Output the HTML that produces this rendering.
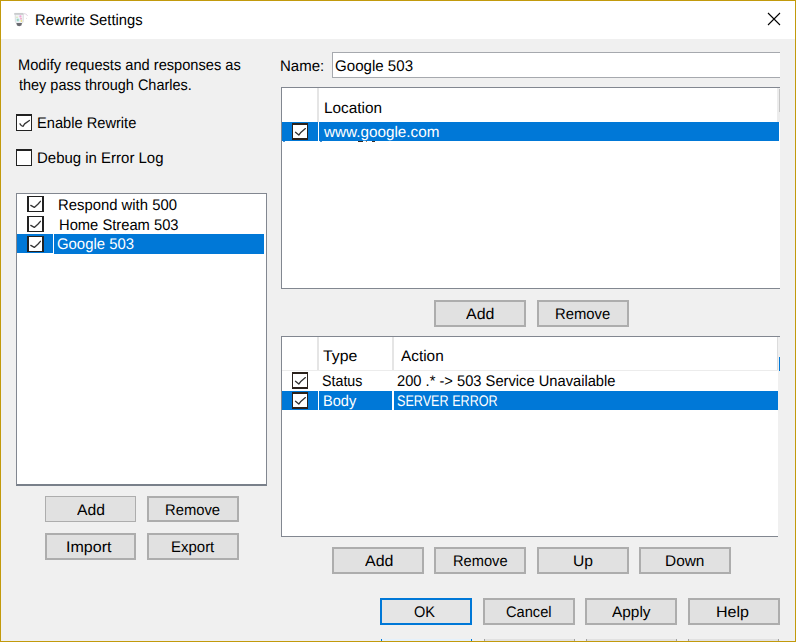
<!DOCTYPE html>
<html><head><meta charset="utf-8">
<style>
*{margin:0;padding:0;box-sizing:border-box}
html,body{width:796px;height:642px;overflow:hidden;background:#f0f0f0}
body{position:relative;font-family:"Liberation Sans",sans-serif;font-size:15.4px;color:#000;text-rendering:geometricPrecision}
.a{position:absolute}
.t{position:absolute;white-space:pre;line-height:20px;transform-origin:0 15px}
.frame{left:0;top:0;width:796px;height:642px;border:1px solid #c29a0c}
.title{left:1px;top:1px;width:794px;height:38px;background:#fff}
.cb{position:absolute;width:16px;height:17px;background:#fff;border:1px solid #222;border-top-width:2px}
.cbl{width:17px;height:16px;border:2px solid #222;border-top-width:1px;border-bottom-width:1px}
.cbt{width:16px;height:17px;border:1px solid #2a221c;border-top-width:2px;border-bottom-width:2px}
.btn{position:absolute;width:92px;height:27px;background:#e1e1e1;border:2px solid #adadad}
.b1{border-width:1px}
.tbl{position:absolute;background:#fff;border:1px solid #828790}
.sel{position:absolute;background:#0078d7}
</style></head><body>

<div class="a title"></div>
<svg class="a" style="left:0;top:0" width="32" height="32" viewBox="0 0 32 32">
  <path d="M24,13.6 Q26.8,13.6 27.6,16" stroke="#dcc9dc" stroke-width="0.8" fill="none"/>
  <circle cx="26.5" cy="18.3" r="0.5" fill="#d8d8d8"/>
  <path d="M14.6,13.4 L23.2,13.4 L23.4,15.2 L23.2,21.8 L22,23.6 L16.6,23.6 L15.4,21.8 L15.2,15.2 Z" fill="#f1f3f5" stroke="#cfd2d5" stroke-width="0.7"/>
  <rect x="14.4" y="13" width="9" height="1.8" fill="#c9cbcd"/>
  <circle cx="17.8" cy="20" r="1.7" fill="#bfe6f0"/>
  <circle cx="17.9" cy="20" r="0.75" fill="#7fbf7c"/>
  <circle cx="20.4" cy="16.4" r="1.1" fill="#f5a0d8"/>
  <circle cx="21" cy="18.8" r="1" fill="#f0b0c8"/>
  <circle cx="21.4" cy="21" r="0.9" fill="#eee08a"/>
  <circle cx="17" cy="17.2" r="0.7" fill="#cfe6a0"/>
  <path d="M16.4,23 L22,23 L21.4,25.4 L19.2,26.2 L17,25.4 Z" fill="#6a6a70"/>
</svg>
<svg class="a" style="left:767px;top:12px" width="14" height="14" viewBox="0 0 14 14"><path d="M1 1 L13 13 M13 1 L1 13" stroke="#000" stroke-width="1.1"/></svg>

<div class="cb" style="left:16px;top:114px"></div><svg class="a" style="left:16px;top:114px" width="17" height="17"><path d="M4,9.8 Q5.5,12.3 7,12.3 L8.6,9.9 L13.4,6.5" stroke="#333" stroke-width="1.3" fill="none" stroke-linecap="round" stroke-linejoin="round"/></svg>
<div class="cb" style="left:16px;top:149px"></div>

<div class="tbl" style="left:16px;top:193px;width:251px;height:293px;border-bottom:2px solid #79808a"></div>
<div class="sel" style="left:17px;top:234px;width:36px;height:19px"></div>
<div class="sel" style="left:54px;top:234px;width:210px;height:20px"></div>
<div class="cb cbl" style="left:27px;top:196px"></div><svg class="a" style="left:27px;top:196px" width="17" height="17"><path d="M3.8,9.4 L7.3,11.4 L11.1,8 L13.4,5.3" stroke="#333" stroke-width="1.3" fill="none" stroke-linecap="round" stroke-linejoin="round"/></svg>
<div class="cb cbl" style="left:27px;top:216px"></div><svg class="a" style="left:27px;top:216px" width="17" height="17"><path d="M3.8,9.4 L7.3,11.4 L11.1,8 L13.4,5.3" stroke="#333" stroke-width="1.3" fill="none" stroke-linecap="round" stroke-linejoin="round"/></svg>
<div class="cb cbl" style="left:27px;top:236px"></div><svg class="a" style="left:27px;top:236px" width="17" height="17"><path d="M3.8,9.4 L7.3,11.4 L11.1,8 L13.4,5.3" stroke="#333" stroke-width="1.3" fill="none" stroke-linecap="round" stroke-linejoin="round"/></svg>

<div class="btn b1" style="left:45px;top:496px;width:91px;height:26px"></div>
<div class="btn" style="left:147px;top:496px;height:26px"></div>
<div class="btn" style="left:45px;top:533px;width:91px"></div>
<div class="btn" style="left:147px;top:533px"></div>

<div class="a" style="left:332px;top:52px;width:448px;height:26px;background:#fff;border:1px solid #a6a9ae;border-right:none"></div>

<div class="tbl" style="left:281px;top:87px;width:499px;height:202px;border-right:none"></div>
<div class="a" style="left:317px;top:88px;width:2px;height:34px;background:#e5e5e5"></div>
<div class="a" style="left:777px;top:88px;width:3px;height:34px;background:#ececec"></div>
<div class="a" style="left:779px;top:89px;width:1px;height:23px;background:#c6c6c6"></div>
<div class="sel" style="left:282px;top:122px;width:36px;height:19px"></div>
<div class="sel" style="left:319px;top:122px;width:460px;height:19px"></div>
<div class="cb cbt" style="left:292px;top:123px"></div><svg class="a" style="left:292px;top:123px" width="17" height="17"><path d="M3.5,9.3 L6.8,12 L8.5,9.8 L13.4,5.6" stroke="#333" stroke-width="1.3" fill="none" stroke-linecap="round" stroke-linejoin="round"/></svg>
<div class="a" style="left:358px;top:141px;width:5px;height:1px;background:#3a2a20"></div><div class="a" style="left:366px;top:141px;width:1px;height:1px;background:#b08050"></div><div class="a" style="left:372px;top:141px;width:3px;height:1px;background:#3a2a20"></div><div class="a" style="left:283px;top:141px;width:2px;height:1px;background:#4a90d0"></div><div class="a" style="left:320px;top:141px;width:2px;height:1px;background:#4a90d0"></div>

<div class="btn" style="left:434px;top:300px"></div>
<div class="btn" style="left:537px;top:300px"></div>

<div class="tbl" style="left:281px;top:336px;width:499px;height:201px;border-right:none"></div>
<div class="a" style="left:282px;top:370px;width:496px;height:1px;background:#ececec"></div>
<div class="a" style="left:317px;top:337px;width:2px;height:33px;background:#e5e5e5"></div>
<div class="a" style="left:392px;top:337px;width:2px;height:33px;background:#e5e5e5"></div>
<div class="a" style="left:777px;top:337px;width:1px;height:33px;background:#dcdcdc"></div>
<div class="a" style="left:778px;top:337px;width:2px;height:200px;background:#f0f0f0"></div>
<div class="a" style="left:779px;top:357px;width:1px;height:14px;background:#0078d7"></div>
<div class="cb cbt" style="left:292px;top:372px"></div><svg class="a" style="left:292px;top:372px" width="17" height="17"><path d="M3.5,9.3 L6.8,12 L8.5,9.8 L13.4,5.6" stroke="#333" stroke-width="1.3" fill="none" stroke-linecap="round" stroke-linejoin="round"/></svg>
<div class="sel" style="left:282px;top:391px;width:36px;height:19px"></div>
<div class="sel" style="left:319px;top:391px;width:73px;height:19px"></div>
<div class="sel" style="left:394px;top:391px;width:384px;height:19px"></div>
<div class="cb cbt" style="left:292px;top:392px"></div><svg class="a" style="left:292px;top:392px" width="17" height="17"><path d="M3.5,9.3 L6.8,12 L8.5,9.8 L13.4,5.6" stroke="#333" stroke-width="1.3" fill="none" stroke-linecap="round" stroke-linejoin="round"/></svg>

<div class="btn" style="left:332px;top:547px"></div>
<div class="btn" style="left:434px;top:547px"></div>
<div class="btn" style="left:537px;top:547px"></div>
<div class="btn" style="left:639px;top:547px"></div>

<div class="btn" style="left:380px;top:598px;border-color:#0078d7;background:#e5e5e5"></div>
<div class="btn" style="left:483px;top:598px"></div>
<div class="btn" style="left:585px;top:598px"></div>
<div class="btn" style="left:688px;top:598px"></div>
<div class="a" style="left:381px;top:639px;width:91px;height:2px;background:#e5f1fb;border-left:1px solid #0078d7;border-right:1px solid #0078d7"></div>
<div class="a" style="left:484px;top:639px;width:91px;height:2px;background:#e1e1e1;border-left:1px solid #a0a0a0;border-right:1px solid #a0a0a0"></div>
<div class="a" style="left:586px;top:639px;width:91px;height:2px;background:#e1e1e1;border-left:1px solid #a0a0a0;border-right:1px solid #a0a0a0"></div>
<div class="a" style="left:688px;top:639px;width:91px;height:2px;background:#e1e1e1;border-left:1px solid #a0a0a0;border-right:1px solid #a0a0a0"></div>

<div class="t" id="title" style="left:34.52px;top:11.00px;letter-spacing:0.000px;color:#000;transform:scale(0.9602,1.0)">Rewrite Settings</div>
<div class="t" id="m1" style="left:18.40px;top:56.00px;letter-spacing:0.000px;color:#000;transform:scale(0.9503,1.0)">Modify requests and responses as</div>
<div class="t" id="m2" style="left:19.00px;top:76.00px;letter-spacing:0.000px;color:#000;transform:scale(0.9392,1.0)">they pass through Charles.</div>
<div class="t" id="en" style="left:36.80px;top:114.00px;letter-spacing:0.000px;color:#000;transform:scale(0.9515,1.0)">Enable Rewrite</div>
<div class="t" id="dbg" style="left:36.80px;top:148.50px;letter-spacing:0.000px;color:#000;transform:scale(0.9728,1.0)">Debug in Error Log</div>
<div class="t" id="r1" style="left:58.40px;top:195.50px;letter-spacing:0.000px;color:#000;transform:scale(0.9652,1.0)">Respond with 500</div>
<div class="t" id="r2" style="left:59.00px;top:215.50px;letter-spacing:0.000px;color:#000;transform:scale(0.9570,1.0)">Home Stream 503</div>
<div class="t" id="r3" style="left:57.40px;top:235.00px;letter-spacing:0.000px;color:#fff;transform:scale(0.9676,1.0)">Google 503</div>
<div class="t" id="bAddL" style="left:76.60px;top:501.00px;letter-spacing:0.000px;color:#000;transform:scale(1.0196,1.0)">Add</div>
<div class="t" id="bRemL" style="left:165.40px;top:501.00px;letter-spacing:0.000px;color:#000;transform:scale(0.9614,1.0)">Remove</div>
<div class="t" id="bImp" style="left:66.40px;top:537.80px;letter-spacing:0.000px;color:#000;transform:scale(1.0440,1.0)">Import</div>
<div class="t" id="bExp" style="left:171.00px;top:537.80px;letter-spacing:0.000px;color:#000;transform:scale(0.9728,1.0)">Export</div>
<div class="t" id="name" style="left:280.40px;top:56.80px;letter-spacing:0.000px;color:#000;transform:scale(0.9734,1.0)">Name:</div>
<div class="t" id="gfield" style="left:335.40px;top:56.70px;letter-spacing:0.000px;color:#000;transform:scale(0.9804,1.0)">Google 503</div>
<div class="t" id="loc" style="left:324.40px;top:98.80px;letter-spacing:0.000px;color:#000;transform:scale(0.9967,1.0)">Location</div>
<div class="t" id="www" style="left:323.60px;top:123.00px;letter-spacing:0.000px;color:#fff;transform:scale(0.9918,1.0)">www.google.com</div>
<div class="t" id="bAdd1" style="left:466.00px;top:305.00px;letter-spacing:0.000px;color:#000;transform:scale(1.0381,1.0)">Add</div>
<div class="t" id="bRem1" style="left:555.40px;top:305.00px;letter-spacing:0.000px;color:#000;transform:scale(0.9616,1.0)">Remove</div>
<div class="t" id="type" style="left:323.20px;top:347.00px;letter-spacing:0.000px;color:#000;transform:scale(1.0290,1.0)">Type</div>
<div class="t" id="action" style="left:400.60px;top:347.00px;letter-spacing:0.000px;color:#000;transform:scale(0.9974,1.0)">Action</div>
<div class="t" id="status" style="left:322.40px;top:371.70px;letter-spacing:0.000px;color:#000;transform:scale(0.9261,1.0)">Status</div>
<div class="t" id="s200" style="left:397.40px;top:371.70px;letter-spacing:0.000px;color:#000;transform:scale(0.9545,1.0)">200 .* -&gt; 503 Service Unavailable</div>
<div class="t" id="body" style="left:323.40px;top:392.00px;letter-spacing:0.000px;color:#fff;transform:scale(0.9484,1.0)">Body</div>
<div class="t" id="serr" style="left:397.40px;top:392.00px;letter-spacing:0.000px;color:#fff;transform:scale(0.8195,1.0)">SERVER ERROR</div>
<div class="t" id="bAdd2" style="left:364.60px;top:551.60px;letter-spacing:0.000px;color:#000;transform:scale(1.0388,1.0)">Add</div>
<div class="t" id="bRem2" style="left:453.00px;top:551.60px;letter-spacing:0.000px;color:#000;transform:scale(0.9525,1.0)">Remove</div>
<div class="t" id="bUp" style="left:573.40px;top:551.60px;letter-spacing:0.000px;color:#000;transform:scale(1.0182,1.0)">Up</div>
<div class="t" id="bDown" style="left:665.40px;top:551.60px;letter-spacing:0.000px;color:#000;transform:scale(1.0020,1.0)">Down</div>
<div class="t" id="bOK" style="left:414.40px;top:602.80px;letter-spacing:0.000px;color:#000;transform:scale(0.9448,1.0)">OK</div>
<div class="t" id="bCan" style="left:506.00px;top:602.80px;letter-spacing:0.000px;color:#000;transform:scale(0.9510,1.0)">Cancel</div>
<div class="t" id="bApp" style="left:612.00px;top:602.80px;letter-spacing:0.000px;color:#000;transform:scale(1.0009,1.0)">Apply</div>
<div class="t" id="bHelp" style="left:716.40px;top:602.80px;letter-spacing:0.000px;color:#000;transform:scale(1.0439,1.0)">Help</div>
<div class="a frame"></div>
</body></html>
